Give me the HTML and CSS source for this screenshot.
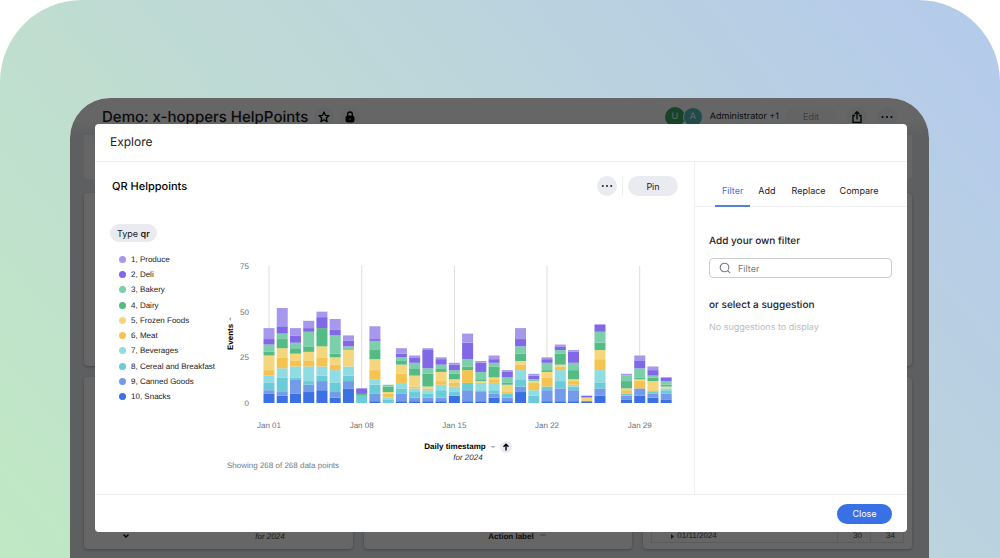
FILE: index.html
```html
<!DOCTYPE html>
<html lang="en">
<head>
<meta charset="utf-8">
<meta name="viewport" content="width=device-width, initial-scale=1">
<title>Explore – QR Helppoints</title>
<link rel="stylesheet" href="styles.css">
</head>
<body>
<div class="stage">
  <div class="device">
    <div class="dashboard">
      <header class="dash-header">
        <h1 class="dash-title">Demo: x-hoppers HelpPoints</h1>
        <button class="round" aria-label="Favourite"><svg width="12" height="12" viewBox="0 0 12 12" fill="none" stroke="#000" stroke-width="1.3" stroke-linejoin="round"><path d="M6 1l1.4 3.3 3.6.3-2.7 2.4.8 3.6L6 8.700l-3.100 1.900.8-3.600L1 4.600l3.600-.3z"/></svg></button>
        <button class="round" aria-label="Locked"><svg width="12" height="12" viewBox="0 0 12 12"><rect x="1.500" y="4.500" width="9" height="7" rx="2.500"/><path d="M3.600 5V3.400a2.400 2.400 0 0 1 4.800 0V5" fill="none" stroke="#000" stroke-width="1.300"/><path d="M6 7v2" stroke="#999" stroke-width="1.200"/></svg></button>
        <div class="people">
          <span class="avatar avatar-u">U</span><span class="avatar avatar-a">A</span>
          <span class="people-name">Administrator +1</span>
        </div>
        <button class="edit" disabled>Edit</button>
        <button class="round" aria-label="Share"><svg width="12" height="12" viewBox="0 0 12 12" fill="none" stroke="#000" stroke-width="1.300"><path d="M4 4.500H2v7h8v-7H8M6 8.500V1M3.700 3L6 .8 8.300 3"/></svg></button>
        <button class="round" aria-label="More"><svg width="12" height="12" viewBox="0 0 12 12"><circle cx="1.500" cy="6" r="1"/><circle cx="6" cy="6" r="1"/><circle cx="10.500" cy="6" r="1"/></svg></button>
      </header>
      <div class="cards">
        <section class="card card-wide card-top"></section>
        <section class="card card-wide"></section>
        <section class="card card-low">
          <svg class="tick" width="6" height="4" viewBox="0 0 6 4" fill="none" stroke="#000" stroke-width="1.300"><path d="M.5.5L3 3 5.500.5"/></svg>
          <em class="card-year">for 2024</em>
        </section>
        <section class="card card-low card-center">
          <strong>Action label</strong>
          <svg width="6" height="4" viewBox="0 0 6 4" fill="none" stroke="#999"><path d="M.5 1h5"/></svg>
        </section>
        <section class="card card-low card-table">
          <div class="table-row"><span class="row-date"><svg width="3" height="5" viewBox="0 0 3 5" fill="#444"><path d="M0 0l3 2.500L0 5z"/></svg>01/11/2024</span><span class="cell">30</span><span class="cell">34</span></div>
        </section>
      </div>
    </div>

    <div class="overlay">
      <div class="modal" role="dialog" aria-labelledby="modal-title">
        <header class="modal-header"><h2 class="modal-title" id="modal-title">Explore</h2></header>
        <div class="modal-body">
          <main class="main">
            <div class="main-head">
              <h3 class="main-title">QR Helppoints</h3>
              <button class="more" aria-label="More options"><svg width="12" height="12" viewBox="0 0 12 12" fill="#1d2025"><circle cx="1.800" cy="6" r="1"/><circle cx="6" cy="6" r="1"/><circle cx="10.200" cy="6" r="1"/></svg></button>
              <span class="rule"></span>
              <button class="pin">Pin</button>
            </div>
            <button class="chip">Type <strong>qr</strong></button>
            <div class="chart-area">
              <ul class="legend">
                <li><i class="dot c1"></i>1, Produce</li>
                <li><i class="dot c2"></i>2, Deli</li>
                <li><i class="dot c3"></i>3, Bakery</li>
                <li><i class="dot c4"></i>4, Dairy</li>
                <li><i class="dot c5"></i>5, Frozen Foods</li>
                <li><i class="dot c6"></i>6, Meat</li>
                <li><i class="dot c7"></i>7, Beverages</li>
                <li><i class="dot c8"></i>8, Cereal and Breakfast</li>
                <li><i class="dot c9"></i>9, Canned Goods</li>
                <li><i class="dot c10"></i>10, Snacks</li>
              </ul>
              <div class="y-title"><span>Events</span><svg width="4" height="4" viewBox="0 0 4 4"><path d="M1 0v4L3 2z" fill="#aaa"/></svg></div>
              <svg class="plot" viewBox="0 0 444 184" id="plot" role="img" aria-label="Events per day by type"></svg>
            </div>
            <div class="x-title">
              <div class="x-name"><strong>Daily timestamp</strong><svg width="6" height="4" viewBox="0 0 6 4"><path d="M.5 1h5L3 3z" fill="#aaa"/></svg><button class="sort" aria-label="Sort ascending"><svg width="8" height="8" viewBox="0 0 8 8" fill="none" stroke="#000" stroke-width="1.400"><path d="M4 7.500V1.200M1.500 3.700L4 1.200l2.500 2.500"/></svg></button></div>
              <em class="x-year">for 2024</em>
            </div>
            <p class="note">Showing 268 of 268 data points</p>
          </main>
          <aside class="side">
            <nav class="tabs" role="tablist">
              <button class="tab tab-on" role="tab" aria-selected="true">Filter</button>
              <button class="tab" role="tab">Add</button>
              <button class="tab" role="tab">Replace</button>
              <button class="tab" role="tab">Compare</button>
            </nav>
            <div class="side-body">
              <label class="side-title" for="filter">Add your own filter</label>
              <div class="search">
                <svg width="12" height="12" viewBox="0 0 12 12" fill="none" stroke="#777b82" stroke-width="1.100"><circle cx="5.500" cy="5.500" r="4.300"/><path d="M8.700 8.700L11.200 11.200"/></svg>
                <input id="filter" type="text" placeholder="Filter">
              </div>
              <h4 class="side-title">or select a suggestion</h4>
              <p class="empty">No suggestions to display</p>
            </div>
          </aside>
        </div>
        <footer class="modal-footer"><button class="close">Close</button></footer>
      </div>
    </div>
  </div>
</div>
<script src="chart.js"></script>
</body>
</html>
```
FILE: styles.css
```css
* { box-sizing: border-box; }
body { margin: 0; background: #fff; font-family: Inter, "Liberation Sans", sans-serif; font-size: 8px; color: #1d2025; text-rendering: geometricPrecision; }
h1, h2, h3, h4, p, ul { margin: 0; padding: 0; font-weight: 500; }
ul { list-style: none; }
button { font: inherit; color: inherit; border: 0; padding: 0; background: none; cursor: pointer; }
strong { font-weight: 600; }
svg { display: block; flex: none; }

.stage {
  min-height: 100vh;
  display: flex;
  padding: 98px 71px 0 70px;
  border-radius: 82px 82px 0 0;
  background: linear-gradient(50deg, #bfe8c3 0%, #c0ddd1 34%, #bbd3de 66%, #b5cbea 94%);
}
.device {
  flex: 1;
  display: grid;
  grid-template: minmax(0, 1fr) / minmax(0, 1fr);
  overflow: hidden;
  border-radius: 40px 40px 0 0;
  background: #e9edf0;
}
.dashboard, .overlay { grid-area: 1 / 1; }
.dashboard { display: flex; flex-direction: column; padding: 0 17px 9px 14px; }
.cards, .legend, .y-title, .plot, .x-title, .note { font-family: "Liberation Sans", Arial, sans-serif; }

.dash-header {
  display: flex;
  align-items: center;
  gap: 6px;
  height: 37px;
  margin: 0 -17px 0 -14px;
  padding: 0 32px;
  background: linear-gradient(#fff 60%, #e9edf0);
}
.dash-title { font-size: 15px; line-height: 20px; }
.round { width: 20px; height: 20px; border-radius: 50%; display: grid; place-items: center; background: #f6f7f9; }
.people { display: flex; align-items: center; margin-left: auto; font-size: 9px; }
.avatar { width: 20px; height: 20px; border-radius: 50%; line-height: 20px; text-align: center; color: #fff; }
.avatar-u { background: #3ba864; }
.avatar-a { background: #50b8bd; margin-left: -2px; border: 1px solid #fff; line-height: 18px; }
.people-name { margin-left: 7px; }
.edit { width: 52px; height: 20px; border-radius: 10px; background: #f9fafb; color: #9a9da3; font-size: 9px; margin-right: 4px; }
.edit ~ .round + .round { margin-left: 4px; }

.cards { flex: 1; display: grid; grid-template: 43px 1fr 172px / repeat(3, 1fr); gap: 11px; }
.card { background: #fff; border-radius: 4px; box-shadow: 0 1px 3px #a5abb3; }
.card-wide { grid-column: 1 / -1; }
.card-top { margin-bottom: -1px; border-radius: 0 0 4px 4px; box-shadow: none; }
.card-top + .card-wide { margin-top: 4px; }
.card-low { display: flex; align-items: flex-end; padding: 8px; }
.card-low .tick { margin: 0 0 3px 31px; }
.card-year { margin: 0 60px 0 auto; line-height: 8px; color: #444; }
.card-center { justify-content: center; gap: 6px; padding-left: 46px; }
.card-center svg { margin-bottom: 3px; }
.card-table { padding-bottom: 6px; }
.table-row { flex: 1; display: flex; height: 13px; border: 1px solid #e4e4e4; border-top: 0; line-height: 12px; color: #444; }
.row-date { flex: 1; display: flex; align-items: center; gap: 3px; padding-left: 19px; }
.cell { width: 33px; padding-right: 8px; text-align: right; border-left: 1px solid #e4e4e4; }

.overlay { z-index: 1; display: flex; padding: 26px 22px; padding-left: 25px; background: rgba(0, 0, 0, .6); }
.modal { flex: 1; min-width: 0; display: flex; flex-direction: column; border-radius: 4px; background: #fff; overflow: hidden; }
.modal-header { display: flex; align-items: center; height: 38px; padding: 0 15px 2px; border-bottom: 1px solid #eff0f1; }
.modal-title { font-size: 12px; font-weight: 400; line-height: 16px; }
.modal-body { flex: 1; display: flex; min-height: 0; }
.main { flex: 1; min-width: 0; padding: 14px 16px 0 15px; display: flex; flex-direction: column; }
.main-head { display: flex; align-items: center; gap: 5px; padding-left: 2px; }
.main-title { flex: 1; font-size: 11px; line-height: 16px; color: #000; }
.more { width: 20px; height: 20px; border-radius: 50%; background: #e9ebf1; display: grid; place-items: center; }
.rule { width: 1px; height: 20px; background: #eff0f1; }
.pin { width: 50px; height: 20px; border-radius: 10px; background: #e9ebf1; font-size: 9px; }
.chip { align-self: flex-start; height: 18px; margin-top: 28px; padding: 0 7px; border-radius: 9px; background: #e9ebf1; font-size: 9px; }

.chart-area { display: grid; grid-template-columns: 117px 7px 1fr; margin-top: 10px; }
.legend { display: flex; flex-direction: column; justify-content: space-between; height: 152px; padding-left: 9px; }
.legend li { display: flex; align-items: center; gap: 5px; line-height: 15px; white-space: nowrap; }
.dot { width: 7px; height: 7px; border-radius: 50%; }
.y-title { display: flex; align-items: center; justify-content: center; gap: 3px; height: 163px; writing-mode: vertical-rl; transform: rotate(180deg); font-weight: 700; line-height: 7px; color: #000; }
.plot { width: 100%; height: auto; }
.plot text { font-size: 8px; fill: #6b6f76; }
.grid-line { stroke: #dcdddf; }

.c1 { background: #a698ec; fill: #a698ec; }
.c2 { background: #8168e6; fill: #8168e6; }
.c3 { background: #7bcfa9; fill: #7bcfa9; }
.c4 { background: #55bb85; fill: #55bb85; }
.c5 { background: #f6d67d; fill: #f6d67d; }
.c6 { background: #f5c350; fill: #f5c350; }
.c7 { background: #8fdce3; fill: #8fdce3; }
.c8 { background: #6bcbd8; fill: #6bcbd8; }
.c9 { background: #739be9; fill: #739be9; }
.c10 { background: #3c71e5; fill: #3c71e5; }

.x-title { display: flex; flex-direction: column; align-items: center; padding-left: 148px; margin-top: 5px; }
.x-name { display: flex; align-items: center; gap: 4px; line-height: 12px; color: #000; }
.sort { width: 12px; height: 12px; border-radius: 50%; background: #e9ebf1; display: grid; place-items: center; }
.x-year { line-height: 9px; color: #333; }
.note { padding-left: 117px; line-height: 8px; font-weight: 400; color: #777b82; }

.side { width: 213px; border-left: 1px solid #eff0f1; }
.tabs { display: flex; height: 45px; padding-left: 20px; border-bottom: 1px solid #eff0f1; }
.tab { padding: 14px 7px 0; font-size: 9px; border-bottom: 2px solid transparent; margin-bottom: -1px; }
.tab-on { color: #3c71e5; border-bottom-color: #5580e0; }
.tab + .tab { padding: 14px 8px 0; }
.tab:last-child { padding-left: 6px; }
.side-body { padding: 27px 15px 0 14px; }
.side-title { display: block; font-size: 10px; line-height: 14px; font-weight: 500; }
.search { display: flex; align-items: center; gap: 7px; height: 20px; margin: 10px 0 20px; padding: 0 9px; border: 1px solid #c9cbd0; border-radius: 4px; }
.search input { flex: 1; min-width: 0; border: 0; padding: 0; outline: 0; background: none; font: inherit; font-size: 9px; }
.search input::placeholder { color: #777b82; opacity: 1; }
.empty { margin-top: 10px; font-size: 9px; line-height: 12px; font-weight: 400; color: #b9bbc0; }

.modal-footer { display: flex; align-items: center; justify-content: flex-end; height: 38px; padding: 0 15px; border-top: 1px solid #eff0f1; }
.close { width: 55px; height: 20px; border-radius: 10px; background: #3970e6; color: #fff; font-size: 9px; }
```
FILE: chart.js
```js
// Cumulative event counts per day, from Snacks at the base up to Produce.
const days = [
  [5, 7, 11, 15, 18, 26, 28, 32, 35, 41],
  [4, 6, 14, 19, 25, 30, 35, 38, 42, 52],
  [5, 13, 14, 20, 23, 27, 30, 33, 37, 41],
  [6, 10, 12, 20, 23, 28, 31, 39, 41, 45],
  [7, 12, 15, 20, 25, 31, 41, 41, 47, 50],
  [3, 6, 11, 18, 21, 25, 27, 37, 40, 46],
  [8, 12, 15, 20, 20, 29, 29, 31, 34, 37],
  [0, 0, 4, 4, 4, 4, 5, 5, 8, 8],
  [1, 5, 10, 13, 18, 24, 29, 34, 35, 42],
  [0, 0, 2, 3, 5, 6, 9, 10, 10, 10],
  [1, 5, 8, 11, 16, 21, 23, 25, 27, 30],
  [1, 3, 6, 8, 9, 15, 19, 22, 25, 26],
  [1, 3, 5, 7, 8, 9, 16, 19, 29, 30],
  [1, 3, 7, 10, 12, 17, 19, 21, 24, 25],
  [4, 4, 6, 9, 11, 13, 16, 18, 21, 22],
  [1, 7, 11, 11, 18, 18, 20, 24, 33, 38],
  [1, 6, 7, 11, 11, 12, 13, 17, 22, 23],
  [3, 5, 7, 11, 13, 14, 20, 22, 24, 26],
  [1, 3, 5, 5, 6, 10, 11, 14, 17, 18],
  [6, 9, 13, 18, 21, 23, 27, 31, 35, 41],
  [0, 0, 4, 7, 11, 12, 12, 13, 15, 16],
  [1, 7, 9, 9, 14, 17, 18, 22, 24, 25],
  [1, 8, 12, 18, 20, 21, 27, 29, 31, 32],
  [1, 7, 9, 10, 12, 13, 18, 22, 28, 29],
  [1, 1, 1, 1, 1, 3, 3, 3, 4, 4],
  [4, 8, 11, 18, 24, 29, 33, 39, 43, 43],
  [],
  [2, 4, 5, 5, 7, 8, 12, 15, 15, 16],
  [4, 8, 8, 8, 12, 13, 14, 19, 23, 26],
  [3, 5, 6, 6, 7, 12, 14, 15, 18, 20],
  [2, 5, 7, 8, 8, 9, 10, 12, 14, 14]
];
const base = 151, top75 = 14, pitch = 13.24, first = 35, barWidth = 11;
const unit = (base - top75) / 75;
const plot = document.getElementById('plot');
const add = (tag, attrs, text) => {
  const el = document.createElementNS('http://www.w3.org/2000/svg', tag);
  for (const key in attrs) el.setAttribute(key, attrs[key]);
  if (text !== undefined) el.textContent = text;
  plot.append(el);
};
[0, 25, 50, 75].forEach(v =>
  add('text', { x: 15, y: base - v * unit + 3, 'text-anchor': 'end' }, v));
[0, 7, 14, 21, 28].forEach(d => {
  const x = first + d * pitch;
  add('line', { class: 'grid-line', x1: x, x2: x, y1: top75, y2: base });
  add('text', { x, y: 176, 'text-anchor': 'middle' }, 'Jan ' + String(d + 1).padStart(2, '0'));
});
days.forEach((stack, d) => {
  let low = 0;
  stack.forEach((high, i) => {
    if (high > low) {
      add('rect', {
        class: 'c' + (10 - i), x: first + d * pitch - barWidth / 2, width: barWidth,
        y: base - high * unit, height: (high - low) * unit
      });
    }
    low = high;
  });
});
```
